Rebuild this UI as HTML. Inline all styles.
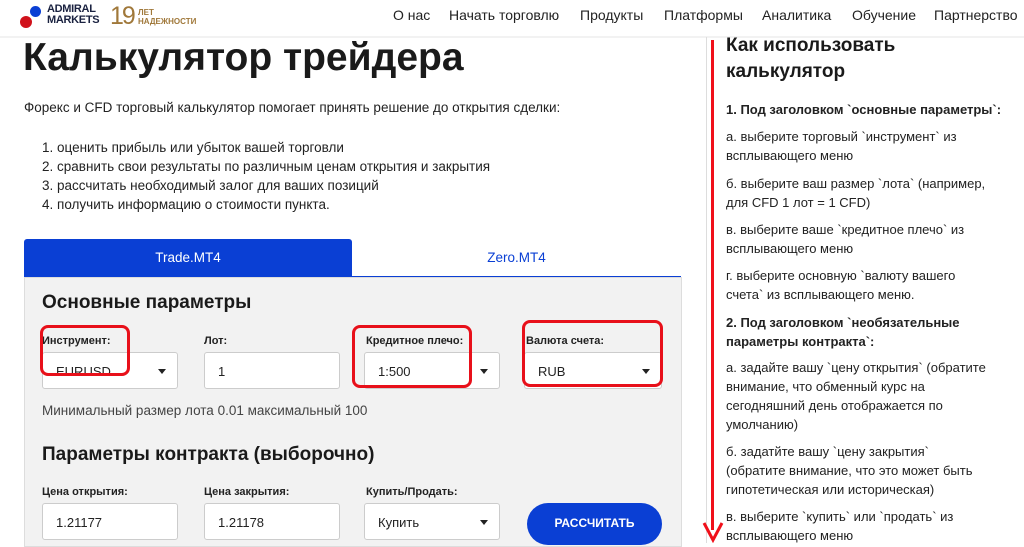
<!DOCTYPE html>
<html><head><meta charset="utf-8"><style>
*{box-sizing:border-box;margin:0;padding:0}
body{width:1024px;height:543px;overflow:hidden;background:#fff;font-family:"Liberation Sans",sans-serif;color:#222;position:relative}
.a{position:absolute;white-space:nowrap}
.nav{font-size:14px;color:#222;top:7px}
.lbl{font-size:11px;font-weight:bold;color:#222}
.inp{position:absolute;background:#fff;border:1px solid #ccc;border-radius:3px;height:37px;font-size:13px;padding:11px 0 0 13px;color:#222}
.car{position:absolute;right:11px;top:16px;width:0;height:0;border-left:4px solid transparent;border-right:4px solid transparent;border-top:5px solid #222}
.red{position:absolute;border:3px solid #e8101a;border-radius:8px}
.rt{position:absolute;left:726px;font-size:13px;color:#222;line-height:19px;width:290px}
</style></head><body>
<div class="a" style="left:30px;top:6px;width:11px;height:11px;border-radius:50%;background:#0a3fd4"></div>
<div class="a" style="left:20px;top:16px;width:12px;height:12px;border-radius:50%;background:#d0121b"></div>
<div class="a" style="left:47px;top:4px;font-size:11px;font-weight:bold;line-height:11px;color:#1a2240;letter-spacing:-.3px">ADMIRAL<br>MARKETS</div>
<div class="a" style="left:110px;top:2px;font-size:25px;color:#a0783a;line-height:28px;letter-spacing:-2px">19</div>
<div class="a" style="left:138px;top:8px;font-size:8px;font-weight:bold;line-height:9px;color:#a0783a">ЛЕТ<br>НАДЕЖНОСТИ</div>
<div class="a nav" style="left:393px">О нас</div>
<div class="a nav" style="left:449px">Начать торговлю</div>
<div class="a nav" style="left:580px">Продукты</div>
<div class="a nav" style="left:664px">Платформы</div>
<div class="a nav" style="left:762px">Аналитика</div>
<div class="a nav" style="left:852px">Обучение</div>
<div class="a nav" style="left:934px">Партнерство</div>
<div class="a" style="left:0;top:36px;width:1024px;height:2px;background:#f2f2f2"></div>

<div class="a" style="left:23px;top:36px;font-size:39px;font-weight:bold;color:#1a1a1a">Калькулятор трейдера</div>
<div class="a" style="left:24px;top:100px;font-size:13.5px">Форекс и CFD торговый калькулятор помогает принять решение до открытия сделки:</div>
<div class="a" style="left:42px;top:138px;font-size:13.5px;line-height:19px">1. оценить прибыль или убыток вашей торговли<br>2. сравнить свои результаты по различным ценам открытия и закрытия<br>3. рассчитать необходимый залог для ваших позиций<br>4. получить информацию о стоимости пункта.</div>

<div class="a" style="left:24px;top:239px;width:328px;height:38px;background:#0a3fd4;border-radius:3px 3px 0 0;color:#fff;font-size:13.5px;text-align:center;line-height:38px">Trade.MT4</div>
<div class="a" style="left:352px;top:239px;width:329px;height:38px;color:#0a3fd4;font-size:13.5px;text-align:center;line-height:38px;border-bottom:1px solid #0a3fd4">Zero.MT4</div>
<div class="a" style="left:24px;top:277px;width:658px;height:270px;background:#f2f2f2;border:1px solid #ddd"></div>
<div class="a" style="left:42px;top:292px;font-size:19px;font-weight:bold;color:#1a1a1a">Основные параметры</div>
<div class="a lbl" style="left:42px;top:335px">Инструмент:</div>
<div class="a lbl" style="left:204px;top:335px">Лот:</div>
<div class="a lbl" style="left:366px;top:335px">Кредитное плечо:</div>
<div class="a lbl" style="left:526px;top:335px">Валюта счета:</div>
<div class="inp" style="left:42px;top:352px;width:136px">EURUSD<div class="car"></div></div>
<div class="inp" style="left:204px;top:352px;width:136px">1</div>
<div class="inp" style="left:364px;top:352px;width:136px">1:500<div class="car"></div></div>
<div class="inp" style="left:524px;top:352px;width:138px">RUB<div class="car"></div></div>
<div class="red" style="left:40px;top:325px;width:90px;height:51px"></div>
<div class="red" style="left:352px;top:325px;width:120px;height:63px"></div>
<div class="red" style="left:522px;top:320px;width:141px;height:67px"></div>
<div class="a" style="left:42px;top:403px;font-size:13.5px;color:#444">Минимальный размер лота 0.01 максимальный 100</div>
<div class="a" style="left:42px;top:444px;font-size:19px;font-weight:bold;color:#1a1a1a">Параметры контракта (выборочно)</div>
<div class="a lbl" style="left:42px;top:486px">Цена открытия:</div>
<div class="a lbl" style="left:204px;top:486px">Цена закрытия:</div>
<div class="a lbl" style="left:366px;top:486px">Купить/Продать:</div>
<div class="inp" style="left:42px;top:503px;width:136px">1.21177</div>
<div class="inp" style="left:204px;top:503px;width:136px">1.21178</div>
<div class="inp" style="left:364px;top:503px;width:136px">Купить<div class="car"></div></div>
<div class="a" style="left:527px;top:503px;width:135px;height:42px;border-radius:21px;background:#0a3fd4;color:#fff;font-size:12px;font-weight:bold;text-align:center;line-height:40px">РАССЧИТАТЬ</div>

<div class="a" style="left:706px;top:37px;width:1px;height:506px;background:#ddd"></div>
<div class="a" style="left:711px;top:40px;width:3px;height:490px;background:#f0101a"></div>
<svg class="a" style="left:702px;top:515px" width="22" height="28"><path d="M2 8 L11 25 L20 8" fill="none" stroke="#f0101a" stroke-width="3"/></svg>
<div class="rt" style="top:33px;font-size:19px;line-height:26px;font-weight:bold;color:#1a1a1a">Как использовать<br>калькулятор</div>
<div class="rt" style="top:100px;font-weight:bold">1. Под заголовком `основные параметры`:</div>
<div class="rt" style="top:127px">а. выберите торговый `инструмент` из<br>всплывающего меню</div>
<div class="rt" style="top:174px">б. выберите ваш размер `лота` (например,<br>для CFD 1 лот = 1 CFD)</div>
<div class="rt" style="top:220px">в. выберите ваше `кредитное плечо` из<br>всплывающего меню</div>
<div class="rt" style="top:266px">г. выберите основную `валюту вашего<br>счета` из всплывающего меню.</div>
<div class="rt" style="top:313px;font-weight:bold">2. Под заголовком `необязательные<br>параметры контракта`:</div>
<div class="rt" style="top:358px">а. задайте вашу `цену открытия` (обратите<br>внимание, что обменный курс на<br>сегодняшний день отображается по<br>умолчанию)</div>
<div class="rt" style="top:442px">б. задатйте вашу `цену закрытия`<br>(обратите внимание, что это может быть<br>гипотетическая или историческая)</div>
<div class="rt" style="top:507px">в. выберите `купить` или `продать` из<br>всплывающего меню</div>
</body></html>
